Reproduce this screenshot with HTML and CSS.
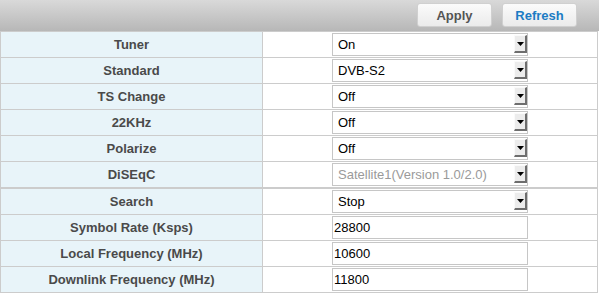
FILE: index.html
```html
<!DOCTYPE html>
<html>
<head>
    <title>Tuner Settings</title>
    <link rel="stylesheet" href="styles.css">
</head>
<body>
    <div class="toolbar">
        <button class="btn">Apply</button>
        <button class="btn btn-blue">Refresh</button>
    </div>

    <table class="settings">
        <tr>
            <td class="label">Tuner</td>
            <td class="value">
                <span class="combo">
                    <select><option>On</option><option>Off</option></select>
                    <span class="arrow"><svg width="7" height="4" viewBox="0 0 7 4"><path d="M0 0H7L3.5 4Z" fill="#000"/></svg></span>
                </span>
            </td>
        </tr>
        <tr>
            <td class="label">Standard</td>
            <td class="value">
                <span class="combo">
                    <select><option>DVB-S2</option><option>DVB-S</option></select>
                    <span class="arrow"><svg width="7" height="4" viewBox="0 0 7 4"><path d="M0 0H7L3.5 4Z" fill="#000"/></svg></span>
                </span>
            </td>
        </tr>
        <tr>
            <td class="label">TS Change</td>
            <td class="value">
                <span class="combo">
                    <select><option>Off</option><option>On</option></select>
                    <span class="arrow"><svg width="7" height="4" viewBox="0 0 7 4"><path d="M0 0H7L3.5 4Z" fill="#000"/></svg></span>
                </span>
            </td>
        </tr>
        <tr>
            <td class="label">22KHz</td>
            <td class="value">
                <span class="combo">
                    <select><option>Off</option><option>On</option></select>
                    <span class="arrow"><svg width="7" height="4" viewBox="0 0 7 4"><path d="M0 0H7L3.5 4Z" fill="#000"/></svg></span>
                </span>
            </td>
        </tr>
        <tr>
            <td class="label">Polarize</td>
            <td class="value">
                <span class="combo">
                    <select><option>Off</option><option>H</option><option>V</option></select>
                    <span class="arrow"><svg width="7" height="4" viewBox="0 0 7 4"><path d="M0 0H7L3.5 4Z" fill="#000"/></svg></span>
                </span>
            </td>
        </tr>
        <tr class="group-end">
            <td class="label">DiSEqC</td>
            <td class="value">
                <span class="combo">
                    <select disabled><option>Satellite1(Version 1.0/2.0)</option></select>
                    <span class="arrow"><svg width="7" height="4" viewBox="0 0 7 4"><path d="M0 0H7L3.5 4Z" fill="#000"/></svg></span>
                </span>
            </td>
        </tr>
        <tr>
            <td class="label">Search</td>
            <td class="value">
                <span class="combo">
                    <select><option>Stop</option><option>Start</option></select>
                    <span class="arrow"><svg width="7" height="4" viewBox="0 0 7 4"><path d="M0 0H7L3.5 4Z" fill="#000"/></svg></span>
                </span>
            </td>
        </tr>
        <tr>
            <td class="label">Symbol Rate (Ksps)</td>
            <td class="value"><input type="text" value="28800"></td>
        </tr>
        <tr>
            <td class="label">Local Frequency (MHz)</td>
            <td class="value"><input type="text" value="10600"></td>
        </tr>
        <tr>
            <td class="label">Downlink Frequency (MHz)</td>
            <td class="value"><input type="text" value="11800"></td>
        </tr>
    </table>
</body>
</html>
```

FILE: styles.css
```css
body {
    font-family: "Liberation Sans", Arial, sans-serif;
    font-size: 13px;
    margin: 0;
    background: #fff;
}
.toolbar {
    height: 31px;
    box-sizing: border-box;
    display: flex;
    justify-content: flex-end;
    align-items: flex-start;
    gap: 10px;
    padding: 3px 22px 0 0;
    background: linear-gradient(#d9d9d9, #b7b7b7);
}
.btn {
    width: 75px;
    height: 24px;
    border: 1px solid #d0d0d0;
    border-radius: 3px;
    background: linear-gradient(#fbfbfb, #ebebeb);
    font-family: "Liberation Sans", Arial, sans-serif;
    font-size: 13px;
    font-weight: bold;
    color: #555;
    padding: 0;
    cursor: pointer;
}
.btn-blue {
    color: #1c7cc4;
}
.settings {
    width: 598px;
    border-collapse: collapse;
    border: 1px solid #ccc;
}
.settings td {
    height: 25px;
    padding: 0;
    border-bottom: 1px solid #ccc;
}
.settings .group-end td {
    border-bottom: 2px solid #ccc;
}
.label {
    width: 261px;
    background: #e8f4f9;
    border-right: 1px solid #ccc;
    text-align: center;
    font-weight: bold;
    color: #4a4a4a;
}
.value {
    text-align: center;
    font-size: 0;
}
.combo {
    position: relative;
    display: inline-block;
    width: 196px;
    height: 23px;
    vertical-align: middle;
}
.combo select {
    appearance: none;
    -webkit-appearance: none;
    width: 100%;
    height: 23px;
    box-sizing: border-box;
    border: 1px solid #c6c6c6;
    border-radius: 0;
    background: #fff;
    padding: 0 0 0 5px;
    font-family: "Liberation Sans", Arial, sans-serif;
    font-size: 13px;
    color: #000;
}
.combo select:disabled {
    color: #9a9a9a;
    opacity: 1;
}
.arrow {
    position: absolute;
    top: 2px;
    right: 1px;
    width: 13px;
    height: 18px;
    box-sizing: border-box;
    background: #ececec;
    border-top: 1px solid #fafafa;
    border-left: 1px solid #fafafa;
    border-right: 2px solid #6e6e6e;
    border-bottom: 2px solid #6e6e6e;
    display: flex;
    align-items: center;
    justify-content: center;
    pointer-events: none;
}
.value input {
    width: 196px;
    height: 23px;
    box-sizing: border-box;
    border: 1px solid #c6c6c6;
    padding: 0 1px;
    vertical-align: middle;
    font-family: "Liberation Sans", Arial, sans-serif;
    font-size: 13px;
    color: #000;
}
```
